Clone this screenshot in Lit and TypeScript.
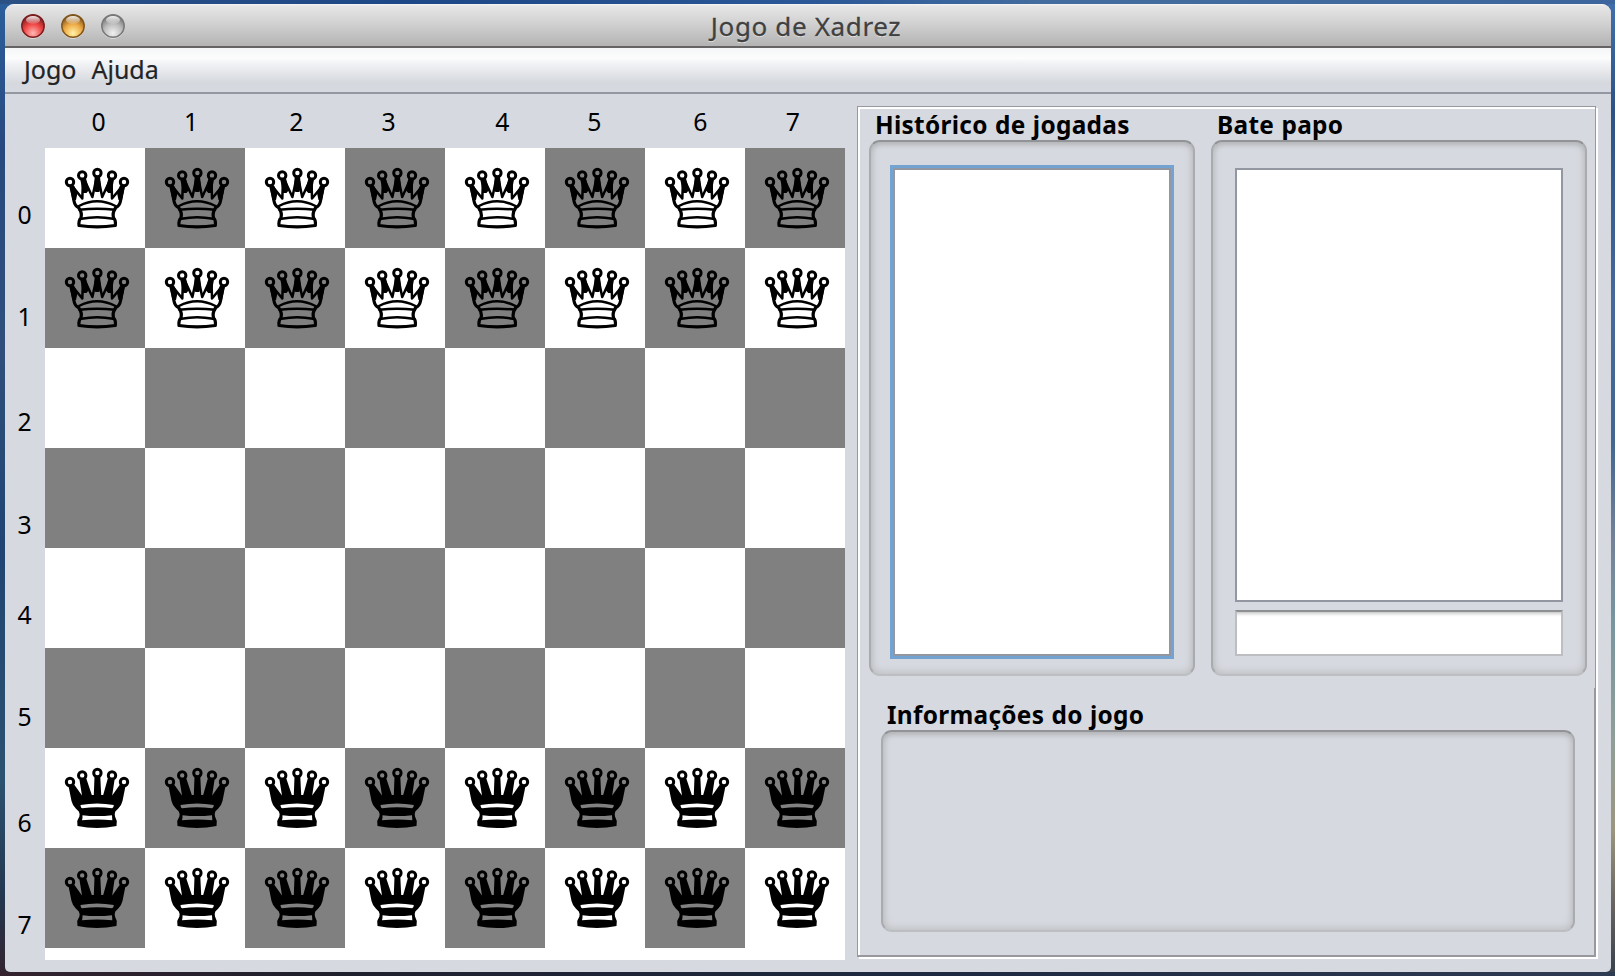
import { LitElement, html, svg, css } from "lit";
import { customElement, property } from "lit/decorators.js";

@customElement("queen-piece")
class QueenPiece extends LitElement {
  @property({ type: Boolean }) dark = false;
  static styles = css`
    :host { display: block; width: 100px; height: 100px; }
    svg { display: block; }
    .ring { fill: none; stroke: #000; stroke-width: 3; }
    .line { fill: none; stroke: #000; stroke-width: 3.2; stroke-linejoin: round; stroke-linecap: round; }
    .thin { stroke-width: 2.5; }
    .solid { fill: #000; fill-rule: evenodd; }
  `;
  render() {
    const rings = [[25, 34], [37.2, 27.4], [52.4, 25], [67, 27.4], [79, 34]];
    return html`<svg width="100" height="100" viewBox="0 0 100 100">
      ${rings.map(([x, y]) => svg`<circle class="ring" cx=${x} cy=${y} r="3.7"></circle>`)}
      ${this.dark
        ? svg`<path class="solid" d="M23.5 38L29.5 37L37 47.5L34.5 32L41.3 30.5L46.8 47H48.8L49.5 29H55.3L56.2 47H58.2L62.8 30.5L69.5 32L67.2 47.5L74.6 37L80.5 38L77.5 53Q76.3 58 73.3 60.5L70.3 63.5Q69.3 66 70 68.5L71.8 73L71.5 78Q52 82.2 32.5 78L32.2 73L34.4 68.5Q35.2 66 33.8 63.5L30.8 60.5Q27.8 58 26.5 53ZM35.5 57Q35.8 60.3 37.3 60.3Q52 58.3 67.2 60.3Q68.7 60 68.8 57Q52 53.8 35.5 57ZM37.5 67.2Q37.7 71 37 72.2Q52 70.7 67.3 72.2L67 67.2Q52 69 37.5 67.2Z"></path>`
        : svg`<path class="line" d="M26.5 39L29 53Q30 58 33.5 59.5Q37.5 65 36 70Q33.5 72 34 77.5Q52 80.3 70.3 77.5Q71 72 68.5 70Q67 65 70.8 59.5Q74.5 58 75.5 53L78 39"></path>
          <path class="line thin" d="M28 39L37.3 50.5L38 32M39.5 32L47.4 49L51.5 30M53.3 30L57.2 49L65 32M66.5 32L67 50.5L76.5 39"></path>
          <path class="line thin" d="M34 58Q52 48.5 70.5 58M34.5 61.8Q52 59.5 70 61.8M36.5 70.8Q52 67.5 68 70.8"></path>
          <path class="solid" d="M24 37.5L29 37.5L32.5 45L31 52H27.5ZM35.3 31.5L41 30.5L44 42L41.5 45L38 45ZM49.7 29H55L56 39L54.3 44H50.3L49 39ZM63.4 30.5L69 31.5L66.5 45L63.3 45L60.5 42ZM75 37.5L80.3 37.5L77 52H73.5L72 45Z"></path>`}
    </svg>`;
  }
}

@customElement("titled-panel")
class TitledPanel extends LitElement {
  @property() heading = "";
  static styles = css`
    :host { display: flex; flex-direction: column; }
    .title { height: 33px; line-height: 35px; padding-left: 6px; font-weight: 700; font-size: 24.4px; letter-spacing: 0.3px; word-spacing: 0.6px; white-space: nowrap; color: #000; flex: none; }
    .well { flex: 1; box-sizing: border-box; border-radius: 11px; border-top: 2px solid #919396; border-left: 2px solid #a9abaf; border-right: 2px solid #a9abaf; border-bottom: 2px solid #bcbec2;
      box-shadow: inset 0 5px 5px -2px #b5b7ba, inset 4px 0 6px -2px #c0c2c5, inset -4px 0 6px -2px #c0c2c5, inset 0 -5px 7px -2px #c8cacd; display: flex; flex-direction: column; }
    ::slotted(*) { flex: none; }
  `;
  render() {
    return html`<div class="title">${this.heading}</div><div class="well"><slot></slot></div>`;
  }
}

@customElement("app-root")
class AppRoot extends LitElement {
  static styles = css`
    :host { display: block; width: 1615px; height: 976px; overflow: hidden; box-sizing: border-box; padding: 4px 4px 4px 5px; font-family: "Noto Sans", sans-serif;
      background:
        linear-gradient(90deg, #2c5184, #1d4787 25%, #2a5797 50%, #446d9f 65%, #3c659d) top / 100% 4px no-repeat,
        linear-gradient(90deg, #34232f, #20202c 18%, #1e2a42 60%, #2f3b52) bottom / 100% 4px no-repeat,
        linear-gradient(#4270ad 0, #2f5285 110px, #46699a 300px, #42668f 440px, #73829a 540px, #7895a0 620px, #8f9f97 740px, #9c9580 830px, #6b6662 900px, #37404c 976px) right / 8px 100% no-repeat,
        linear-gradient(#2b5f9c 0, #28497f 150px, #2f4f7c 350px, #204573 550px, #2b5270 780px, #24364f 900px, #34232f 976px); }
    .window { height: 968px; box-sizing: border-box; border-radius: 9px 9px 5px 5px; overflow: hidden; background: #d6d9e0; display: flex; flex-direction: column; }
    .titlebar { height: 42px; flex: none; border-bottom: 2px solid #666365; background: linear-gradient(#f6f6f6 0, #e6e6e6 2px, #cfcfcf 50%, #b3b3b3); display: grid; grid-template-columns: 300px 1fr 300px; align-items: center; }
    .lights { display: flex; gap: 16px; padding-left: 16px; padding-top: 3px; }
    .lights svg { display: block; }
    .caption { text-align: center; font-size: 26px; line-height: 36px; padding-top: 1px; padding-right: 4px; color: #404040; text-shadow: 0 1px 0 #e8e8e8; letter-spacing: 0.65px; -webkit-text-stroke: 0.3px #404040; }
    .menubar { height: 44px; flex: none; border-bottom: 2px solid #9297a1; display: flex; gap: 15px; padding-left: 19px; font-size: 25px; line-height: 42px; color: #222426; -webkit-text-stroke: 0.2px #222426; background: linear-gradient(#f4f5f6 0, #fdfdfd 10px, #f4f5f7 14px, #d5d8dd 35px, #d6d9e0 40px); }
    .content { flex: 1; display: flex; min-height: 0; }
    .rows { width: 40px; flex: none; padding-top: 52px; }
    .num { font-size: 24.8px; line-height: 30px; height: 30px; text-align: center; color: #000; }
    .rows .num { width: 39px; }
    .boardcol { width: 800px; flex: none; }
    .cols { height: 54px; display: flex; }
    .cols .num { padding-top: 12px; width: 40px; flex: none; }
    .board { display: grid; grid-template-columns: repeat(8, 100px); grid-auto-rows: 100px; background: #fff; padding-bottom: 12px; }
    .gray { background: #808080; }
    .side { margin: 12px 15px 15px 12px; flex: 1; box-sizing: border-box; display: flex; flex-direction: column; border: 1px solid #97999e; border-bottom: 2px solid #97999e; box-shadow: inset 2px 2px 0 #fff, 2px 2px 0 #fff; padding: 0 8px 0 11px;
      background: linear-gradient(#97999e, #97999e) right bottom / 1px 267px no-repeat; }
    .pair { display: flex; gap: 16px; height: 569px; flex: none; }
    .hist { width: 326px; flex: none; }
    .chat { flex: 1; }
    .info { margin: 21px 12px 0 12px; height: 235px; }
    .list { margin: 23px 19px 0 19px; height: 494px; box-sizing: border-box; border: 3px solid #73a4d1; background: #fff; box-shadow: inset 0 0 0 2px #9297a1; }
    .log { margin: 26px 22px 0 22px; height: 434px; box-sizing: border-box; border: 2px solid #9297a1; background: #fff; }
    .field { margin: 8px 22px 0 22px; height: 46px; box-sizing: border-box; border: 2px solid #bcbec1; border-top-color: #8d8f92; background: linear-gradient(#c9cacb 0, #f3f3f3 3px, #fff 5px); }
  `;

  private light(id: string, rim: string, mid: string, low: string) {
    return html`<svg width="24" height="25" viewBox="0 0 24 25">
      <defs>
        <radialGradient id=${id} cx=".5" cy=".82" r=".75"><stop offset="0" stop-color=${low}></stop><stop offset=".55" stop-color=${mid}></stop><stop offset="1" stop-color=${rim}></stop></radialGradient>
        <linearGradient id=${id + "g"} x2="0" y2="1"><stop offset="0" stop-color="#fff" stop-opacity=".9"></stop><stop offset="1" stop-color="#fff" stop-opacity=".1"></stop></linearGradient>
      </defs>
      <circle cx="12" cy="13" r="11.7" fill="#e9e9e9"></circle>
      <circle cx="12" cy="12" r="11.2" fill="url(#${id})" stroke=${rim} stroke-width="1.5"></circle>
      <ellipse cx="12" cy="6" rx="7" ry="4" fill="url(#${id}g)"></ellipse>
    </svg>`;
  }

  render() {
    const colX = [98.6, 191, 296.3, 388.5, 502.3, 594.3, 700.5, 793];
    const rowY = [215.5, 317.5, 423, 525.5, 616, 718, 824, 926];
    return html`<div class="window">
      <div class="titlebar">
        <div class="lights">
          ${this.light("r", "#7d1f20", "#ef4543", "#ffb9b5")}
          ${this.light("y", "#82571d", "#eda945", "#fff3a6")}
          ${this.light("w", "#77797a", "#bdbdbd", "#f1f1f1")}
        </div>
        <div class="caption">Jogo de Xadrez</div>
      </div>
      <div class="menubar"><span>Jogo</span><span>Ajuda</span></div>
      <div class="content">
        <div class="rows">
          ${rowY.map((y, i) => html`<div class="num" style="margin-top:${i ? y - rowY[i - 1] - 30 : y - 163}px">${i}</div>`)}
        </div>
        <div class="boardcol">
          <div class="cols">
            ${colX.map((x, i) => html`<div class="num" style="margin-left:${i ? x - colX[i - 1] - 40 : x - 65}px">${i}</div>`)}
          </div>
          <div class="board">
            ${Array.from({ length: 64 }, (_, i) => {
              const r = i >> 3, c = i & 7;
              return html`<div class=${(r + c) % 2 ? "gray" : ""}>${r < 2 || r > 5 ? html`<queen-piece ?dark=${r > 5}></queen-piece>` : ""}</div>`;
            })}
          </div>
        </div>
        <div class="side">
          <div class="pair">
            <titled-panel class="hist" heading="Histórico de jogadas"><div class="list"></div></titled-panel>
            <titled-panel class="chat" heading="Bate papo"><div class="log"></div><div class="field"></div></titled-panel>
          </div>
          <titled-panel class="info" heading="Informações do jogo"></titled-panel>
        </div>
      </div>
    </div>`;
  }
}
